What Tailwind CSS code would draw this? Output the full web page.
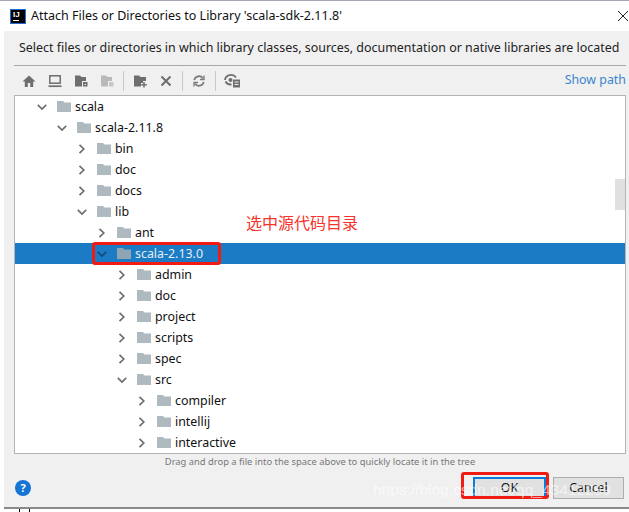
<!DOCTYPE html>
<html lang="en">
<head>
<meta charset="UTF-8" />
<title>Attach Files</title>
<script src="https://cdn.jsdelivr.net/npm/@tailwindcss/browser@4"></script>
</head>
<body class="bg-white font-['Noto_Sans','Open_Sans',sans-serif] text-black">
<svg class="hidden">
  <symbol id="folder" viewBox="0 0 14 11"><path d="M0 0h6l1.500 1.500H14V11H0z" fill="#aeb9c0"/></symbol>
  <symbol id="right" viewBox="0 0 10 10"><path d="M2.500 0.800L6.800 5 2.500 9.200" fill="none" stroke="#6e6e6e" stroke-width="1.700"/></symbol>
  <symbol id="down" viewBox="0 0 10 10"><path d="M0.800 2.800L5 7 9.200 2.800" fill="none" stroke="#6e6e6e" stroke-width="1.700"/></symbol>
</svg>

<div class="relative w-[629px] h-[512px] overflow-hidden">
  <div class="h-px bg-[#a3a7b0]"></div>
  <div class="ml-[4px] h-[506px] flex flex-col">
    <!-- title bar -->
    <div class="h-[30px] shrink-0 flex items-center bg-white pl-[6px]">
      <div class="w-[16px] h-[15px] bg-black border border-[#1c6fd0] text-white pl-[2px]">
        <div class="text-[8px] font-bold leading-[8px] mt-[1px] font-['Liberation_Sans',sans-serif]">IJ</div>
        <div class="w-[6px] h-px bg-white mt-[1px]"></div>
      </div>
      <span class="ml-[5px] text-[12.5px] text-[#111]">Attach Files or Directories to Library 'scala-sdk-2.11.8'</span>
      <svg class="ml-auto" width="12" height="12" viewBox="0 0 12 12"><path d="M1 1L11 11M11 1L1 11" stroke="#222" stroke-width="1"/></svg>
    </div>

    <div class="flex-1 bg-[#f0f0f0] flex flex-col pl-[10px] pr-[3px]">
      <div class="h-[35px] shrink-0 flex items-center pl-[5px] text-[12.45px] text-[#222] whitespace-nowrap border-b border-[#a9a9a9]">Select files or directories in which library classes, sources, documentation or native libraries are located</div>

      <!-- toolbar -->
      <div class="h-[29px] shrink-0 flex items-center relative pl-[2px]">
        <div class="w-[26px] flex justify-center"><svg width="14" height="14" viewBox="0 0 14 14"><path d="M7 1.500L0.500 7.500h2.300V13h3V9h2.400v4h3V7.500h2.300z" fill="#6e6e6e"/></svg></div>
        <div class="w-[26px] flex justify-center"><svg width="14" height="14" viewBox="0 0 14 14" fill="none" stroke="#6e6e6e"><rect x="1.800" y="1.800" width="10.400" height="7.400" stroke-width="1.500"/><path d="M0.500 12.200h13" stroke-width="1.700"/></svg></div>
        <div class="w-[26px] flex justify-center"><svg width="14" height="14" viewBox="0 0 14 14"><path d="M1 1.500h5l1.500 1.500H12V7H8v5.500H1z" fill="#6e6e6e"/><path d="M9 8h4.500v4.500H9z" fill="#6e6e6e"/><path d="M10.500 10h1.500v1h-1.500z" fill="#f0f0f0"/></svg></div>
        <div class="w-[26px] flex justify-center"><svg width="14" height="14" viewBox="0 0 14 14"><path d="M1 1.500h5l1.500 1.500H12V7H8v5.500H1z" fill="#b9b9b9"/><path d="M9 8h4.500v4.500H9z" fill="#c6c6c6"/></svg></div>
        <div class="w-px h-[20px] bg-[#c9c9c9] ml-[3px] mr-[3px]"></div>
        <div class="w-[26px] flex justify-center"><svg width="15" height="14" viewBox="0 0 15 14"><path d="M1 1.500h5l1.500 1.500H13V7H10v2H8v3.500H1z" fill="#6e6e6e"/><path d="M11 8v5.500M8.300 10.800h5.500" stroke="#6e6e6e" stroke-width="1.500"/></svg></div>
        <div class="w-[26px] flex justify-center"><svg width="12" height="12" viewBox="0 0 12 12"><path d="M1.500 1.500L10.500 10.500M10.500 1.500L1.500 10.500" stroke="#6e6e6e" stroke-width="2"/></svg></div>
        <div class="w-px h-[20px] bg-[#c9c9c9] ml-[3px] mr-[3px]"></div>
        <div class="w-[26px] flex justify-center"><svg width="14" height="14" viewBox="0 0 14 14" fill="none" stroke="#7a7a7a" stroke-width="1.700"><path d="M2.200 6A5 5 0 0 1 11 4.200"/><path d="M11.800 8A5 5 0 0 1 3 9.800"/><path d="M12 1.500V5.500H8" stroke-width="1.300"/><path d="M2 12.500V8.500H6" stroke-width="1.300"/></svg></div>
        <div class="w-px h-[20px] bg-[#c9c9c9] ml-[3px] mr-[3px]"></div>
        <div class="w-[26px] flex justify-center"><svg width="17" height="15" viewBox="0 0 17 15"><path d="M1 7a6 5.500 0 0 1 11-2.500" fill="none" stroke="#6e6e6e" stroke-width="1.800"/><path d="M1.500 8.500a6 5 0 0 0 6 3" fill="none" stroke="#6e6e6e" stroke-width="1.800"/><circle cx="6.500" cy="7" r="2" fill="#6e6e6e"/><rect x="9" y="6.500" width="7" height="8" fill="#6e6e6e"/><path d="M10.500 9h4M10.500 11.500h4" stroke="#f0f0f0"/></svg></div>
        <span class="absolute right-0 top-[5px] text-[12.4px] text-[#3b86cf]">Show path</span>
      </div>

      <!-- tree -->
      <div class="h-[359px] shrink-0 relative bg-white border border-[#b4b4b4] overflow-hidden">
        <ul class="text-[12.4px] text-[#111] leading-[21px]">
          <li class="h-[21px] flex items-center pl-[22px]"><svg class="w-[10px] h-[10px]"><use href="#down"/></svg><svg class="ml-[10px] w-[14px] h-[11px]"><use href="#folder"/></svg><span class="ml-[4px]">scala</span></li>
          <li class="h-[21px] flex items-center pl-[42px]"><svg class="w-[10px] h-[10px]"><use href="#down"/></svg><svg class="ml-[10px] w-[14px] h-[11px]"><use href="#folder"/></svg><span class="ml-[4px]">scala-2.11.8</span></li>
          <li class="h-[21px] flex items-center pl-[62px]"><svg class="w-[10px] h-[10px]"><use href="#right"/></svg><svg class="ml-[10px] w-[14px] h-[11px]"><use href="#folder"/></svg><span class="ml-[4px]">bin</span></li>
          <li class="h-[21px] flex items-center pl-[62px]"><svg class="w-[10px] h-[10px]"><use href="#right"/></svg><svg class="ml-[10px] w-[14px] h-[11px]"><use href="#folder"/></svg><span class="ml-[4px]">doc</span></li>
          <li class="h-[21px] flex items-center pl-[62px]"><svg class="w-[10px] h-[10px]"><use href="#right"/></svg><svg class="ml-[10px] w-[14px] h-[11px]"><use href="#folder"/></svg><span class="ml-[4px]">docs</span></li>
          <li class="h-[21px] flex items-center pl-[62px]"><svg class="w-[10px] h-[10px]"><use href="#down"/></svg><svg class="ml-[10px] w-[14px] h-[11px]"><use href="#folder"/></svg><span class="ml-[4px]">lib</span></li>
          <li class="h-[21px] flex items-center pl-[82px]"><svg class="w-[10px] h-[10px]"><use href="#right"/></svg><svg class="ml-[10px] w-[14px] h-[11px]"><use href="#folder"/></svg><span class="ml-[4px]">ant</span></li>
          <li class="h-[21px] flex items-center pl-[82px] bg-[#1b7bc4] text-[#e6eef5]"><svg class="w-[10px] h-[10px]" viewBox="0 0 10 10"><path d="M0.800 2.800L5 7 9.200 2.800" fill="none" stroke="#174a70" stroke-width="1.700"/></svg><svg class="ml-[10px] w-[14px] h-[11px]" viewBox="0 0 14 11"><path d="M0 0h6l1.500 1.500H14V11H0z" fill="#8fa5b5"/></svg><span class="ml-[4px]">scala-2.13.0</span></li>
          <li class="h-[21px] flex items-center pl-[102px]"><svg class="w-[10px] h-[10px]"><use href="#right"/></svg><svg class="ml-[10px] w-[14px] h-[11px]"><use href="#folder"/></svg><span class="ml-[4px]">admin</span></li>
          <li class="h-[21px] flex items-center pl-[102px]"><svg class="w-[10px] h-[10px]"><use href="#right"/></svg><svg class="ml-[10px] w-[14px] h-[11px]"><use href="#folder"/></svg><span class="ml-[4px]">doc</span></li>
          <li class="h-[21px] flex items-center pl-[102px]"><svg class="w-[10px] h-[10px]"><use href="#right"/></svg><svg class="ml-[10px] w-[14px] h-[11px]"><use href="#folder"/></svg><span class="ml-[4px]">project</span></li>
          <li class="h-[21px] flex items-center pl-[102px]"><svg class="w-[10px] h-[10px]"><use href="#right"/></svg><svg class="ml-[10px] w-[14px] h-[11px]"><use href="#folder"/></svg><span class="ml-[4px]">scripts</span></li>
          <li class="h-[21px] flex items-center pl-[102px]"><svg class="w-[10px] h-[10px]"><use href="#right"/></svg><svg class="ml-[10px] w-[14px] h-[11px]"><use href="#folder"/></svg><span class="ml-[4px]">spec</span></li>
          <li class="h-[21px] flex items-center pl-[102px]"><svg class="w-[10px] h-[10px]"><use href="#down"/></svg><svg class="ml-[10px] w-[14px] h-[11px]"><use href="#folder"/></svg><span class="ml-[4px]">src</span></li>
          <li class="h-[21px] flex items-center pl-[122px]"><svg class="w-[10px] h-[10px]"><use href="#right"/></svg><svg class="ml-[10px] w-[14px] h-[11px]"><use href="#folder"/></svg><span class="ml-[4px]">compiler</span></li>
          <li class="h-[21px] flex items-center pl-[122px]"><svg class="w-[10px] h-[10px]"><use href="#right"/></svg><svg class="ml-[10px] w-[14px] h-[11px]"><use href="#folder"/></svg><span class="ml-[4px]">intellij</span></li>
          <li class="h-[21px] flex items-center pl-[122px]"><svg class="w-[10px] h-[10px]"><use href="#right"/></svg><svg class="ml-[10px] w-[14px] h-[11px]"><use href="#folder"/></svg><span class="ml-[4px]">interactive</span></li>
        </ul>
        <div class="absolute right-0 top-[83px] w-[10px] h-[31px] bg-[#e0e0e0]"></div>
      </div>

      <div class="h-[15px] shrink-0 text-center text-[9.4px] leading-[15px] text-[#777]">Drag and drop a file into the space above to quickly locate it in the tree</div>

      <!-- footer -->
      <div class="flex-1 flex items-center pb-[1px] pr-[2px]">
        <div class="ml-[1px] w-[16px] h-[16px] rounded-full bg-[#1574d4] text-white text-[11px] font-bold leading-[16px] text-center">?</div>
        <button class="ml-auto w-[73px] h-[22px] bg-[#e1e1e1] border-2 border-[#0a7bd6] text-[12.4px] leading-[16px] text-[#111]">OK</button>
        <button class="ml-[7px] w-[71px] h-[22px] bg-[#e1e1e1] border border-[#adadad] text-[12.4px] leading-[16px] text-[#111]">Cancel</button>
      </div>
    </div>
  </div>
  <div class="ml-[4px] h-[2px] bg-[#8a8a8a]"></div>
  <div class="flex h-[3px] pl-[19px] gap-[9px]">
    <div class="w-px bg-black"></div>
    <div class="w-px bg-black"></div>
  </div>

  <!-- annotations -->
  <span class="absolute left-[246px] top-[211px] text-[16px] leading-[22px] text-[#f5332a] font-['Noto_Sans_CJK_SC',sans-serif]">选中源代码目录</span>
  <div class="absolute left-[92px] top-[242px] w-[129px] h-[23px] border-[3px] border-[#f01c14] rounded-[3px]"></div>
  <div class="absolute left-[461px] top-[472px] w-[88px] h-[27px] border-[3px] border-[#f01c14] rounded-[3px]"></div>

  <!-- watermark -->
  <span class="absolute left-[373px] top-[481px] text-[15.500px] leading-[18px] text-white/60 font-['Liberation_Sans',sans-serif]">https://blog.csdn.net/qq_43412289</span>
</div>
</body>
</html>
